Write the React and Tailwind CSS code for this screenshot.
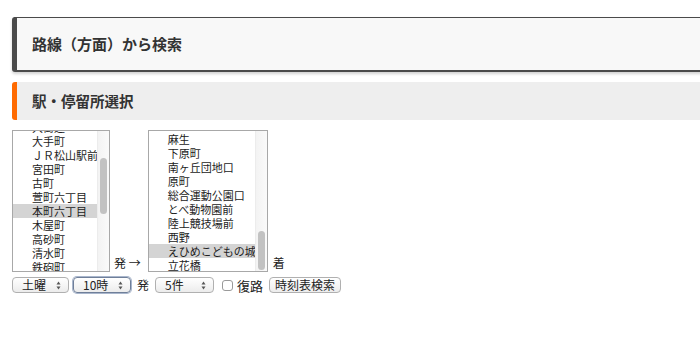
import React from "react";

const font = { fontFamily: '"Noto Sans CJK JP", "Noto Sans", sans-serif' };

function Arrows() {
  return (
    <svg width="5" height="9" viewBox="0 0 5 9" className="shrink-0">
      <path d="M2.5 0.5 L4.5 3.5 L0.5 3.5 Z" fill="#555" />
      <path d="M2.5 8.5 L4.5 5.5 L0.5 5.5 Z" fill="#555" />
    </svg>
  );
}

function FakeSelect({ label, width, focused }) {
  return (
    <div
      className={`flex h-[16px] items-center justify-between rounded-[4px] bg-gradient-to-b from-white to-[#ececec] pl-[9px] pr-[7px] text-[12px] leading-none text-[#222] ${
        focused
          ? "border border-[#6f7f99] shadow-[0_0_0_1px_#a9b6cc]"
          : "border border-[#b0b0b0]"
      }`}
      style={{ width }}
    >
      <span>{label}</span>
      <Arrows />
    </div>
  );
}

function ListBox({ items, selected, offset, width, thumbTop, thumbHeight }) {
  return (
    <div
      className="relative h-[142px] overflow-hidden border border-[#a8a8a8] bg-white"
      style={{ width }}
    >
      <div className="flex h-full">
        <div className="flex-1 overflow-hidden">
          <div style={{ marginTop: offset }}>
            {items.map((it) => (
              <div
                key={it}
                className={`h-[14px] whitespace-nowrap pl-[19px] text-[11px] leading-[14px] text-[#222] ${
                  it === selected ? "bg-[#d4d4d4]" : ""
                }`}
              >
                {it}
              </div>
            ))}
          </div>
        </div>
        <div className="relative w-[12px] shrink-0 border-l border-[#ececec] bg-gradient-to-r from-[#f3f3f3] to-[#fafafa]">
          <div
            className="absolute left-[2px] w-[7px] rounded-full bg-[#c2c2c2]"
            style={{ top: thumbTop, height: thumbHeight }}
          />
        </div>
      </div>
    </div>
  );
}

export default function App() {
  const list1 = [
    "大街道",
    "大手町",
    "ＪＲ松山駅前",
    "宮田町",
    "古町",
    "萱町六丁目",
    "本町六丁目",
    "木屋町",
    "高砂町",
    "清水町",
    "鉄砲町",
    "上一万",
  ];
  const list2 = [
    "麻生",
    "下原町",
    "南ヶ丘団地口",
    "原町",
    "総合運動公園口",
    "とべ動物園前",
    "陸上競技場前",
    "西野",
    "えひめこどもの城",
    "立花橋",
  ];
  return (
    <div className="h-[350px] w-[700px] overflow-hidden bg-white text-[#222]" style={font}>
      <div className="pt-[17px]">
        <div className="ml-[12px] flex h-[55px] w-[720px] items-center rounded-[3px] border-t border-b-2 border-l-[5px] border-[#4a4a4a] bg-[#f8f8f8] pl-[15px] shadow-[0_2px_3px_rgba(0,0,0,0.18)]">
          <span className="text-[15px] font-bold text-[#333]">路線（方面）から検索</span>
        </div>
        <div className="ml-[12px] mt-[10px] flex h-[38px] w-[720px] items-center rounded-l-[3px] border-l-[5px] border-[#ff6a00] bg-[#eeeeee] pl-[15px]">
          <span className="text-[14.5px] font-bold text-[#333]">駅・停留所選択</span>
        </div>
        <div className="ml-[12px] mt-[10px] flex items-end text-[12px] leading-none">
          <ListBox
            items={list1}
            selected="本町六丁目"
            offset={-11}
            width={98}
            thumbTop={27}
            thumbHeight={56}
          />
          <span className="mb-[3px] ml-[4px] mr-[7px] whitespace-pre">発 →</span>
          <ListBox
            items={list2}
            selected="えひめこどもの城"
            offset={1}
            width={120}
            thumbTop={100}
            thumbHeight={39}
          />
          <span className="mb-[3px] ml-[5px]">着</span>
        </div>
        <div className="ml-[12px] mt-[5px] flex items-center text-[12px] leading-none">
          <FakeSelect label="土曜" width={57} />
          <div className="ml-[4px]">
            <FakeSelect label="10時" width={58} focused />
          </div>
          <span className="ml-[6px]">発</span>
          <div className="ml-[6px]">
            <FakeSelect label="5件" width={59} />
          </div>
          <div className="ml-[8px] h-[11px] w-[11px] rounded-[3px] border border-[#9a9a9a] bg-white" />
          <span className="ml-[4px] text-[13px]">復路</span>
          <div className="ml-[6px] flex h-[16px] w-[72px] items-center justify-center rounded-[4px] border border-[#b0b0b0] bg-gradient-to-b from-white to-[#ececec] text-[12px]">
            時刻表検索
          </div>
        </div>
      </div>
    </div>
  );
}
